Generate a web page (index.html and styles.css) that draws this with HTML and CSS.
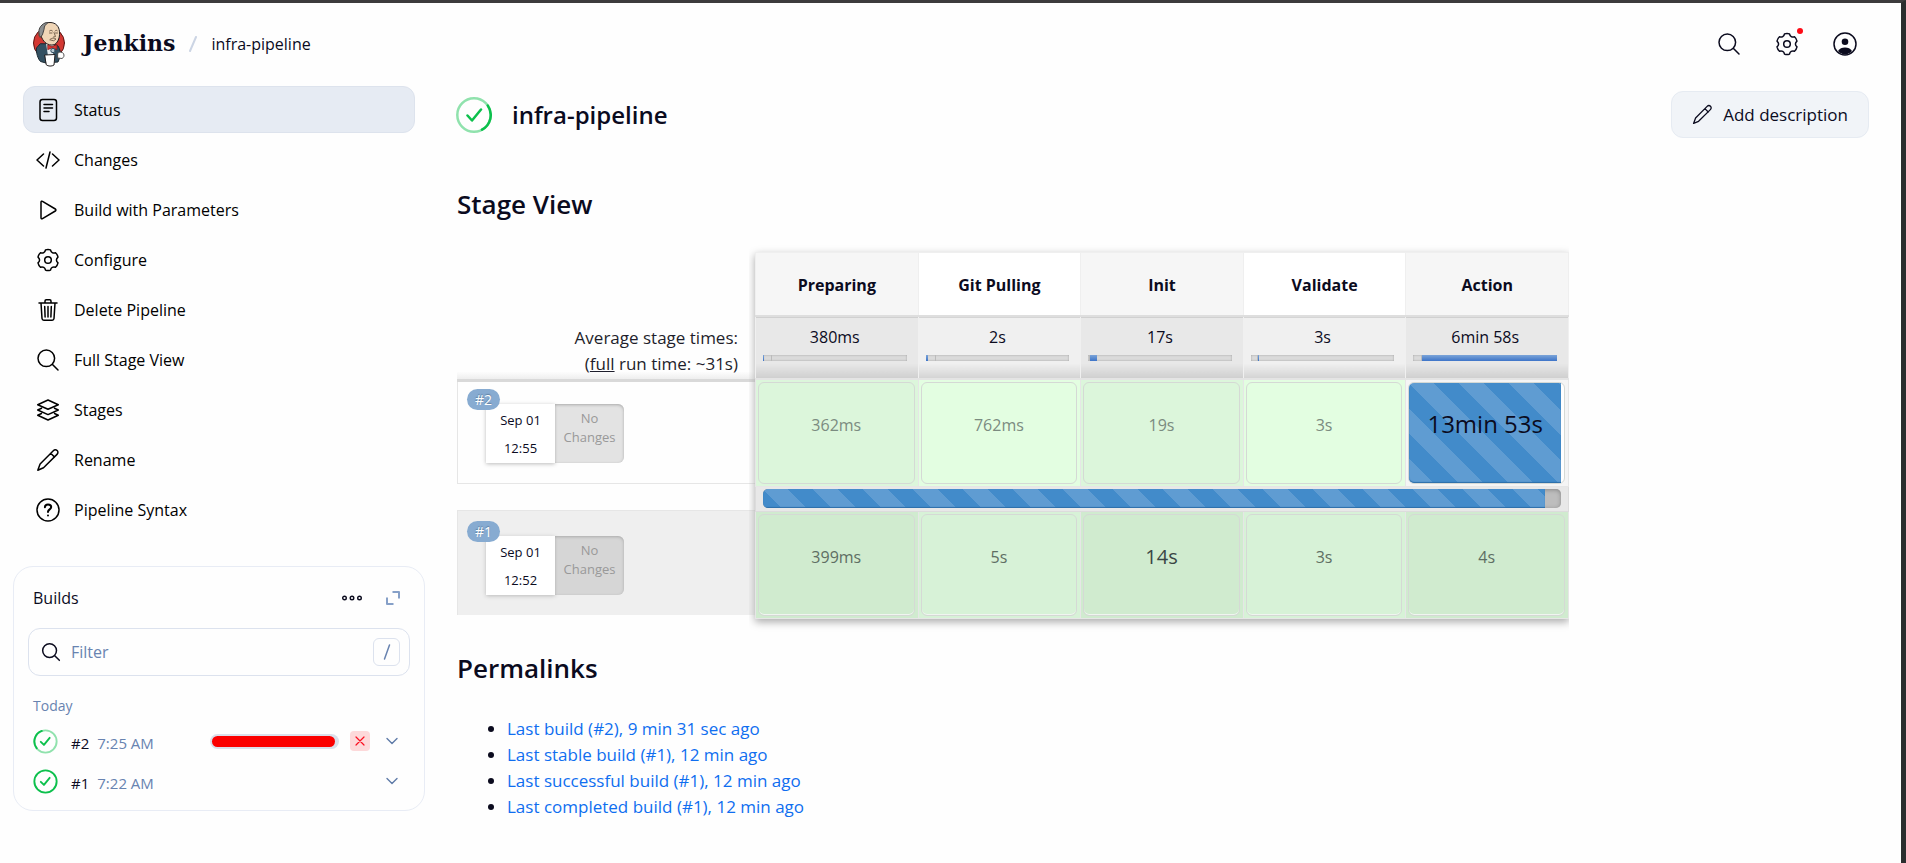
FILE: index.html
```html
<!DOCTYPE html>
<html lang="en">
<head>
<meta charset="utf-8">
<title>infra-pipeline - Jenkins</title>
<link rel="stylesheet" href="styles.css">
</head>
<body>
<svg class="sprite" aria-hidden="true">
  <symbol id="gear" viewBox="0 0 24 24"><path d="M9.500 1.900Q12 .900 14.500 1.900C15 4.600 17 5.500 19.500 4.800Q21.500 6.600 22 9.100C19.900 10.900 19.900 13.100 22 14.900Q21.500 17.400 19.500 19.200C17 18.500 15 19.400 14.500 22.100Q12 23.100 9.500 22.100C9 19.400 7 18.500 4.500 19.200Q2.500 17.400 2 14.900C4.100 13.100 4.100 10.900 2 9.100Q2.500 6.600 4.500 4.800C7 5.500 9 4.600 9.500 1.900Z"/><circle cx="12" cy="12" r="3.300"/></symbol>
  <symbol id="search" viewBox="0 0 24 24"><circle cx="10.300" cy="10.300" r="8.300"/><path d="M16.500 16.500l5.500 5.500"/></symbol>
  <symbol id="pencil" viewBox="0 0 24 24"><path d="M17.300 2.700c1.300-1.300 2.800-1.200 3.800-.200s1.200 2.600-.100 3.900L7.500 19.800 1.800 22.200 4.100 16zM14.700 5.300l3.900 3.800"/></symbol>
  <symbol id="chevron" viewBox="0 0 14 14"><path d="M2 4.500l5 5 5-5"/></symbol>
</svg>

<header class="header">
  <a class="brand" href="#">
    <svg class="logo" viewBox="0 0 34 46" aria-hidden="true">
      <circle cx="17" cy="22" r="15.500" fill="#d33833" stroke="#5a1815"/>
      <path d="M8 23L4.500 27C4 32 6 38 8.500 40.500L14 42l12-1 2-5c1-4 0-8-2-11l-4-2z" fill="#335061" stroke="#1c2a33"/>
      <path d="M14 22l8 1-1 11-5 1z" fill="#e8eef2"/>
      <path d="M8 11C8 5 12 1.500 18 1.500c6 0 9 4 9.500 9 .5 4-.5 9-3.500 12-2 2-6 2-8.500.500C12 21.500 9 17 8 11z" fill="#f0d6b7" stroke="#231f20"/>
      <path d="M8 16c-2-4-1.500-9 2-12 2-2 4-2.500 6-2.500-2 2-4 3-4 7l-1.500 5z" fill="#8c8f90" stroke="#444"/>
      <path d="M17.500 10c1-1 2-1 3 0M23 10c1-1 2-1 2.500 0M17.500 12h2.500M23.500 12h2M22 11.500l1.500 4-2 .500M18 18.500c2-2 4-1.500 6-.500l-2 1.500zM7.500 12c-1.500 1-1 4 1 4" fill="none" stroke="#6b5743" stroke-width=".900"/>
      <path d="M16 24l4 1.500 5-2v5l-5-1.500-4 1.500z" fill="#d33833" stroke="#81110e" stroke-width=".700"/>
      <circle cx="21" cy="29.500" r="2.200" fill="#b7c7d1" stroke="#335061"/>
      <path d="M13 34l10-.500-1 10.500c-2 1.500-6 1.500-7.500 0z" fill="#fff" stroke="#231f20"/>
      <path d="M26 32c2-1.500 4-1 5.500.500 1 2 .500 4-1.500 5l-4-.500z" fill="#fff" stroke="#555"/>
    </svg>
    <span class="wordmark">Jenkins</span>
  </a>
  <svg class="slash" viewBox="0 0 8 16" aria-hidden="true"><path d="M7 1L1 15"/></svg>
  <a class="crumb" href="#">infra-pipeline</a>
  <div class="tools">
    <button class="tool" aria-label="Search"><svg class="icon"><use href="#search"/></svg></button>
    <button class="tool" aria-label="Manage Jenkins"><svg class="icon"><use href="#gear"/></svg><i class="dot"></i></button>
    <button class="tool" aria-label="Account"><svg class="icon" viewBox="0 0 24 24"><circle cx="12" cy="12" r="11"/><circle cx="12" cy="9.700" r="3.300" class="solid"/><path class="solid" d="M5 19c1.500-2.500 4-3.500 7-3.500s5.500 1 7 3.500c-4 4.500-10 4.500-14 0z"/></svg></button>
  </div>
</header>

<div class="page">
  <aside class="side">
    <nav class="tasks">
      <a class="task current" href="#"><svg class="icon" viewBox="0 0 24 24"><rect x="4" y="1.500" width="16.500" height="21" rx="2.500"/><path d="M8 6.500h8.500M8 10h8.500M8 13.500h5"/></svg>Status</a>
      <a class="task" href="#"><svg class="icon" viewBox="0 0 24 24"><path d="M7.500 6L1 12l6.500 6M16.500 6L23 12l-6.500 6M14 4l-4 16"/></svg>Changes</a>
      <a class="task" href="#"><svg class="icon" viewBox="0 0 24 24"><path d="M5 4.200v15.600c0 .900.800 1.300 1.500.900l12.800-7.700c.800-.500.800-1.500 0-2L6.500 3.300C5.800 2.900 5 3.300 5 4.200z"/></svg>Build with Parameters</a>
      <a class="task" href="#"><svg class="icon"><use href="#gear"/></svg>Configure</a>
      <a class="task" href="#"><svg class="icon" viewBox="0 0 24 24"><path d="M5 5l1 15.500c.100 1 .800 1.700 1.800 1.700h8.400c1 0 1.700-.700 1.800-1.700L19 5M3 5h18M9 5V3c0-.700.500-1.200 1.200-1.200h3.600c.700 0 1.200.500 1.200 1.200v2M8.700 8.500l.400 10.500M12 8.500V19M15.300 8.500L14.900 19"/></svg>Delete Pipeline</a>
      <a class="task" href="#"><svg class="icon"><use href="#search"/></svg>Full Stage View</a>
      <a class="task" href="#"><svg class="icon" viewBox="0 0 24 24"><path d="M12 2l10.300 4.800L12 11.300 1.700 6.800zM5.500 10.300L1.700 12 12 16.600 22.300 12l-3.800-1.700M5.500 15.500l-3.800 1.700L12 22l10.300-4.800-3.800-1.700"/></svg>Stages</a>
      <a class="task" href="#"><svg class="icon"><use href="#pencil"/></svg>Rename</a>
      <a class="task" href="#"><svg class="icon" viewBox="0 0 24 24"><circle cx="12" cy="12" r="11"/><path stroke-width="2" d="M8.900 9.200c.100-1.800 1.400-2.700 3.100-2.700s3.200.900 3.200 2.600c0 2.200-3.200 2.400-3.200 4.700v.200M12 17.400v.100"/></svg>Pipeline Syntax</a>
    </nav>

    <section class="builds">
      <div class="builds-head">
        <h2>Builds</h2>
        <button class="mini" aria-label="More"><svg viewBox="0 0 20 6"><circle cx="2.500" cy="3" r="1.800"/><circle cx="10" cy="3" r="1.800"/><circle cx="17.500" cy="3" r="1.800"/></svg></button>
        <button class="expand" aria-label="Expand"><svg viewBox="0 0 14 14"><path d="M6.500 1H13v6.500M1 6.500V13h6.500"/></svg></button>
      </div>
      <label class="filter">
        <svg class="icon"><use href="#search"/></svg>
        <input type="text" placeholder="Filter" aria-label="Filter builds">
        <kbd><svg viewBox="0 0 8 16" aria-hidden="true"><path d="M6.500 1l-5 14"/></svg></kbd>
      </label>
      <h3>Today</h3>
      <div class="build">
        <svg class="ball" viewBox="0 0 24 24"><circle class="faint" cx="12" cy="12" r="10.700"/><path d="M3.600 18.600A10.700 10.700 0 018.500 1.900M7.500 12.300l3 3 5.500-6.800"/></svg>
        <a href="#">#2</a><time>7:25 AM</time>
        <div class="progress"><div class="progress-fill" style="width:98%"></div></div>
        <button class="stop" aria-label="Cancel"><svg viewBox="0 0 10 10"><path d="M1 1l8 8M9 1L1 9"/></svg></button>
        <button class="more" aria-label="Build #2 menu"><svg><use href="#chevron"/></svg></button>
      </div>
      <div class="build">
        <svg class="ball" viewBox="0 0 24 24"><circle cx="12" cy="12" r="10.700"/><path d="M7.500 12.300l3 3 5.500-6.800"/></svg>
        <a href="#">#1</a><time>7:22 AM</time>
        <button class="more" aria-label="Build #1 menu"><svg><use href="#chevron"/></svg></button>
      </div>
    </section>
  </aside>

  <main class="main">
    <div class="title">
      <svg class="status" viewBox="0 0 36 36"><circle class="faint" cx="18" cy="18" r="16.700"/><path d="M31.800 8.600A16.700 16.700 0 0126 32.700M11.500 18.500l4.500 5 9-11"/></svg>
      <h1>infra-pipeline</h1>
      <button class="describe"><svg class="icon"><use href="#pencil"/></svg>Add description</button>
    </div>

    <h2 class="heading">Stage View</h2>
    <div class="stage-view">
      <div class="runs">
        <div class="averages"><div>Average stage times:</div><div>(<u>full</u> run time: ~31s)</div></div>
        <div class="run">
          <span class="badge">#2</span>
          <div class="date"><div>Sep 01</div><div>12:55</div></div>
          <div class="changes">No<br>Changes</div>
        </div>
        <div class="run old">
          <span class="badge">#1</span>
          <div class="date"><div>Sep 01</div><div>12:52</div></div>
          <div class="changes">No<br>Changes</div>
        </div>
      </div>
      <table class="stages">
        <thead><tr><th>Preparing</th><th>Git Pulling</th><th>Init</th><th>Validate</th><th>Action</th></tr></thead>
        <tbody>
          <tr class="totals">
            <td>380ms<div class="meter"><i style="width:1%"></i><b></b></div></td>
            <td>2s<div class="meter"><i style="width:2%"></i><b></b></div></td>
            <td>17s<div class="meter"><s style="width:1%"></s><i style="width:5%"></i></div></td>
            <td>3s<div class="meter"><s style="width:5%"></s><i style="width:1%"></i></div></td>
            <td>6min 58s<div class="meter"><s style="width:6%"></s><i style="width:94%"></i></div></td>
          </tr>
          <tr class="cells">
            <td><div class="cell">362ms</div></td><td><div class="cell">762ms</div></td><td><div class="cell">19s</div></td><td><div class="cell">3s</div></td>
            <td class="active"><div class="cell"><div class="running">13min 53s</div></div></td>
          </tr>
          <tr class="bar"><td colspan="5"><div class="track"><div class="track-fill" style="width:98%"></div></div></td></tr>
          <tr class="cells past">
            <td><div class="cell">399ms</div></td><td><div class="cell">5s</div></td><td><div class="cell slow">14s</div></td><td><div class="cell">3s</div></td><td><div class="cell">4s</div></td>
          </tr>
        </tbody>
      </table>
    </div>

    <h2 class="heading links-heading">Permalinks</h2>
    <ul class="links">
      <li><a href="#">Last build (#2), 9 min 31 sec ago</a></li>
      <li><a href="#">Last stable build (#1), 12 min ago</a></li>
      <li><a href="#">Last successful build (#1), 12 min ago</a></li>
      <li><a href="#">Last completed build (#1), 12 min ago</a></li>
    </ul>
  </main>
</div>
</body>
</html>
```
FILE: styles.css
```css
* { box-sizing: border-box; }
body {
  --ink: #0b0b1e;
  --muted: #6883b0;
  --line: #dce2ee;
  --green: #0cc04c;
  margin: 0;
  min-height: 100vh;
  border-top: 3px solid #3c3b3c;
  border-right: 5px solid #2b2d2e;
  background: #fefefe;
  color: var(--ink);
  font: 16px/26px "Open Sans", "Noto Sans", sans-serif;
}
h1, h2, h3 { margin: 0; font-weight: 400; }
a { color: inherit; text-decoration: none; }
button { margin: 0; padding: 0; border: 0; background: none; color: inherit; font: inherit; }
svg { display: block; flex: none; fill: none; stroke: currentColor; stroke-linecap: round; stroke-linejoin: round; }
.sprite { position: absolute; width: 0; height: 0; }
.icon { width: 24px; height: 24px; stroke-width: 1.5; }
.solid { fill: currentColor; stroke: none; }

.header { display: flex; align-items: center; height: 82px; padding: 0 44px 0 32px; }
.brand { display: flex; align-items: center; gap: 17px; }
.logo { width: 34px; height: 46px; stroke: none; }
.wordmark { padding-bottom: 3px; font: bold 22px/28px "DejaVu Serif", serif; }
.slash { width: 8px; height: 16px; margin: 0 14px; stroke: #ccd5e4; stroke-width: 2; }
.tools { display: flex; gap: 34px; margin-left: auto; }
.tool { position: relative; width: 24px; height: 24px; }
.dot { position: absolute; top: -4px; right: -4px; width: 6px; height: 6px; border-radius: 50%; background: #fe0b16; }

.page { display: flex; padding-top: 1px; }
.side { flex: none; width: 425px; padding-left: 13px; }
.tasks { display: grid; gap: 3px; padding: 0 10px; }
.task { display: flex; align-items: center; gap: 14px; height: 47px; padding: 0 12px; border: 1px solid transparent; border-radius: 12px; color: #000; }
.task.current { border-color: #dde3ed; background: #e6ebf3; }

.builds { margin-top: 33px; padding: 14px 14px 9px; border: 1px solid #e8ecf5; border-radius: 20px; }
.builds-head { display: flex; align-items: center; height: 34px; padding: 0 10px 0 5px; }
.builds-head h2 { margin-right: auto; font-size: 16px; }
.mini svg { width: 20px; height: 6px; stroke-width: 1.4; }
.expand { margin-left: 24px; color: #86a0c8; }
.expand svg { width: 14px; height: 14px; stroke-width: 2; stroke-linecap: butt; }
.filter { display: flex; align-items: center; height: 48px; margin-top: 13px; padding: 0 9px 0 12px; border: 1px solid var(--line); border-radius: 12px; }
.filter .icon { width: 20px; height: 20px; stroke-width: 1.8; }
.filter input { flex: 1; min-width: 0; padding: 0 10px; border: 0; outline: 0; background: none; font: inherit; }
.filter input::placeholder { color: var(--muted); opacity: 1; }
kbd { display: grid; place-items: center; width: 27px; height: 28px; border: 1px solid var(--line); border-radius: 6px; color: var(--muted); }
kbd svg { width: 8px; height: 16px; stroke-width: 1.5; }
.builds h3 { margin: 17px 0 2px 5px; color: var(--muted); font-size: 14px; }
.build { display: flex; align-items: center; height: 40px; padding: 0 11px 0 5px; }
.ball { width: 25px; height: 25px; margin-right: 13px; color: var(--green); stroke-width: 1.8; }
.faint { opacity: .45; }
.build time { margin: 0 auto 0 8px; color: var(--muted); }
.build a, .build time { padding-top: 4px; font-size: 15px; }
.progress { width: 129px; height: 15px; padding: 2px; border-radius: 8px; background: #dae0eb; }
.progress-fill { height: 11px; border-radius: 6px; background: #fb0000; }
.stop { display: grid; place-items: center; width: 20px; height: 20px; margin: 0 15px 0 11px; border-radius: 4px; background: #fdd9da; color: #fb1020; }
.stop svg { width: 10px; height: 10px; stroke-width: 1.2; }
.more svg { width: 14px; height: 14px; color: #5f7ba8; stroke-width: 1.4; }

.main { flex: 1; min-width: 0; padding: 5px 32px 0; }
.title { display: flex; align-items: center; height: 47px; }
.status { width: 36px; height: 36px; margin-left: -1px; color: var(--green); stroke-width: 2.5; }
.title h1 { margin-left: 20px; font-size: 24px; font-weight: 600; }
.describe { display: flex; align-items: center; gap: 10px; height: 47px; margin-left: auto; padding: 0 20px; border: 1px solid #e6ebf2; border-radius: 12px; background: #f1f4f8; font-size: 17px; }
.describe .icon { width: 21px; height: 21px; }
.heading { margin-top: 48px; font-size: 26px; line-height: 36px; font-weight: 600; }

.stage-view { display: flex; margin-top: 30px; }
.runs { width: 298px; padding-top: 64px; }
.averages { height: 66px; padding: 9px 17px 0 0; border-bottom: 3px solid #d9d9d9; background: linear-gradient(transparent 88%, #eee); color: #1e1e2c; font-size: 17px; text-align: right; }
.run { display: grid; grid-template-columns: 69px 69px; align-content: start; position: relative; height: 102px; margin-bottom: 26px; padding: 22px 0 0 28px; border: 1px solid #e6e6e6; border-width: 0 0 1px 1px; font-size: 13px; }
.run.old { height: 105px; margin: 0; padding-top: 25px; border-width: 1px 0 0 1px; background: #efefef; }
.badge { position: absolute; top: 7px; left: 9px; z-index: 1; width: 33px; height: 21px; border-radius: 11px; background: #87abd1; color: #fff; font-size: 14px; line-height: 21px; text-align: center; text-shadow: 0 -1px 1px #5f7f9f; }
.run.old .badge { top: 10px; }
.date, .changes { height: 59px; text-align: center; }
.date { padding-top: 2px; background: #fff; box-shadow: 0 1px 4px #bbb; line-height: 28px; }
.changes { padding-top: 5px; border-radius: 0 6px 6px 0; background: #e3e3e3; box-shadow: inset 0 1px 3px #aaa; color: #999; line-height: 19px; }
.old .changes { background: #d6d6d6; }

.stages { width: 814px; table-layout: fixed; border-collapse: collapse; background: #e8e8e8; box-shadow: 0 3px 8px #aaa; clip-path: inset(-8px 0 -14px -6px); }
.stages th, .stages td { padding: 0; text-align: center; }
.stages th { height: 63px; padding-top: 2px; border: 1px solid #efefef; border-bottom: 2px solid #dedede; background: #f6f6f6; }
.stages th:nth-child(even) { background: #fff; }
.totals td { height: 63px; padding: 7px 11px 0 7px; border: 1px solid #f0f0f0; border-bottom: 2px solid #e4e4e4; background: linear-gradient(#e8e8e8 76%, #cfcfcf); vertical-align: top; }
.totals td:nth-child(even) { background: linear-gradient(#f0f0f0 76%, #d4d4d4); }
.meter { display: flex; height: 6px; margin-top: 5px; background: #dadada; box-shadow: inset 0 0 2px #999; }
.meter i { background: linear-gradient(#7ba4d8, #3d74c8); }
.meter b { width: 8px; border-right: 1px solid #bbb; }
.meter s { border-right: 1px solid #bbb; }
.cells td { height: 105px; padding: 2px 3px 2px 2px; border: 1px solid #e6e6e6; background: #dcf6db; }
.cells td:nth-child(even) { background: #e3fee1; }
.past td { background: #d0ebcf; }
.past td:nth-child(even) { background: #d7f2d7; }
.cell { height: 102px; padding-top: 29px; border: 1px solid #d5d9d5; border-radius: 6px; color: #7b8b80; }
.past .cell { color: #5e6e63; box-shadow: inset 0 -1px #f0f5f0; }
.past .slow { color: #3a4645; font-size: 20px; }
.cells .active { background: #f5f5f5; }
.active .cell { padding: 0 3px 2px 0; background: #fff; }
.running, .track-fill {
  background: linear-gradient(45deg, #5f9cd2 25%, #428bca 25% 50%, #5f9cd2 50% 75%, #428bca 75%) 0 0 / 50px 50px;
  box-shadow: inset 0 -1px 1px #2d6ea9;
}
.running { height: 100px; padding-top: 28px; border-radius: 5px 0 0 5px; color: var(--ink); font-size: 24px; }
.bar td { height: 25px; padding: 0 7px; border: 1px solid #dcdcdc; background: #e8e8e8; }
.track { height: 19px; overflow: hidden; border-radius: 5px; background: #bdbdbd; box-shadow: inset 0 1px 4px #888; }
.track-fill { height: 19px; }

.links-heading { margin-top: 31px; }
.links { margin: 30px 0 0; padding-left: 50px; font-size: 17px; }
.links a { color: #0f6ef0; }
```
